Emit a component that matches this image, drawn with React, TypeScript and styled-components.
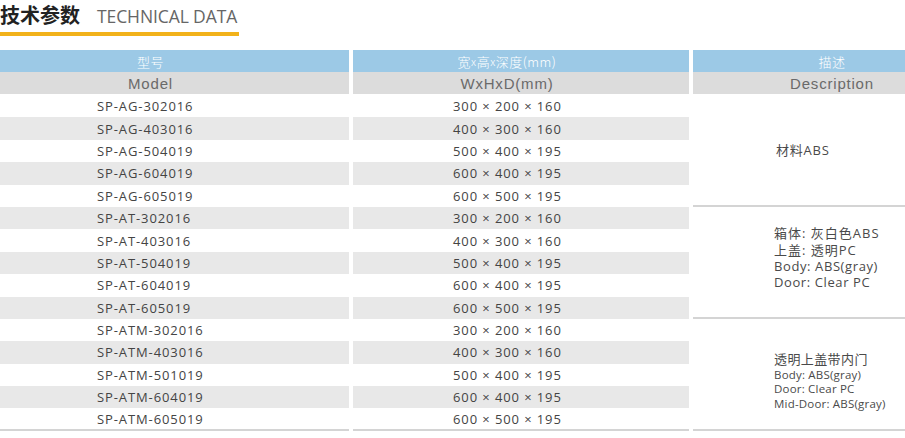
import styled, { createGlobalStyle } from "styled-components";

const GlobalStyle = createGlobalStyle`
  html, body {
    margin: 0;
    padding: 0;
    background: #fff;
    overflow: hidden;
  }
  body {
    font-family: "Open Sans", "Noto Sans CJK SC", sans-serif;
  }
`;

type Row = { model: string; size: string };

const groups: { rows: Row[]; desc: "abs" | "at" | "atm" }[] = [
  {
    desc: "abs",
    rows: [
      { model: "SP-AG-302016", size: "300 × 200 × 160" },
      { model: "SP-AG-403016", size: "400 × 300 × 160" },
      { model: "SP-AG-504019", size: "500 × 400 × 195" },
      { model: "SP-AG-604019", size: "600 × 400 × 195" },
      { model: "SP-AG-605019", size: "600 × 500 × 195" },
    ],
  },
  {
    desc: "at",
    rows: [
      { model: "SP-AT-302016", size: "300 × 200 × 160" },
      { model: "SP-AT-403016", size: "400 × 300 × 160" },
      { model: "SP-AT-504019", size: "500 × 400 × 195" },
      { model: "SP-AT-604019", size: "600 × 400 × 195" },
      { model: "SP-AT-605019", size: "600 × 500 × 195" },
    ],
  },
  {
    desc: "atm",
    rows: [
      { model: "SP-ATM-302016", size: "300 × 200 × 160" },
      { model: "SP-ATM-403016", size: "400 × 300 × 160" },
      { model: "SP-ATM-501019", size: "500 × 400 × 195" },
      { model: "SP-ATM-604019", size: "600 × 400 × 195" },
      { model: "SP-ATM-605019", size: "600 × 500 × 195" },
    ],
  },
];

const Page = styled.div`
  width: 905px;
`;

const TitleBlock = styled.div`
  display: inline-flex;
  flex-direction: column;
  width: 239px;
`;

const TitleLine = styled.div`
  display: flex;
  align-items: baseline;
  gap: 17px;
  height: 32px;
  box-sizing: border-box;
`;

const TitleCn = styled.h2`
  margin: 0;
  font-family: "Noto Sans CJK SC", sans-serif;
  font-size: 20px;
  font-weight: 700;
  color: #222;
  line-height: 30px;
`;

const TitleEn = styled.span`
  font-family: "Open Sans", sans-serif;
  font-size: 17.5px;
  font-weight: 400;
  color: #666;
  letter-spacing: -0.1px;
`;

const TitleBar = styled.div`
  height: 4px;
  background: #f2b21a;
`;

const Grid = styled.div`
  margin-top: 14px;
  display: grid;
  grid-template-columns: 349px 336px 1fr;
  column-gap: 4px;
`;

const HeadCell = styled.div<{ $tone: "blue" | "gray"; $shift: number }>`
  height: 22px;
  display: flex;
  align-items: center;
  justify-content: center;
  padding-left: ${(p) => Math.max(p.$shift, 0) * 2}px;
  padding-right: ${(p) => Math.max(-p.$shift, 0) * 2}px;
  background: ${(p) => (p.$tone === "blue" ? "#9cc9e6" : "#dcdcdc")};
  color: ${(p) => (p.$tone === "blue" ? "#fff" : "#6a6a6a")};
  font-family: ${(p) =>
    p.$tone === "blue"
      ? `"Noto Sans CJK SC", sans-serif`
      : `"Liberation Sans", Arial, sans-serif`};
  font-size: ${(p) => (p.$tone === "blue" ? "13px" : "15px")};
  letter-spacing: ${(p) => (p.$tone === "blue" ? "0.5px" : "0.8px")};
  font-weight: 300;
  margin-bottom: ${(p) => (p.$tone === "gray" ? "1px" : "0")};
`;

const Small = styled.span`
  font-size: 11px;
`;

const BodyCell = styled.div<{ $col: 1 | 2; $alt: boolean; $last: boolean; $pad: number }>`
  grid-column: ${(p) => p.$col};
  height: 22.4px;
  box-sizing: border-box;
  display: flex;
  align-items: center;
  padding-left: ${(p) => p.$pad}px;
  background: ${(p) => (p.$alt ? "#e8e8e8" : "#fff")};
  border-bottom: ${(p) => (p.$last ? "2px solid #d4d4d4" : "none")};
  color: #444;
  font-size: 13px;
  letter-spacing: 0.9px;
  white-space: nowrap;
`;

const DescCell = styled.div<{ $offset: number }>`
  grid-column: 3;
  grid-row: span 5;
  box-sizing: border-box;
  border-bottom: 2px solid #d4d4d4;
  display: flex;
  flex-direction: column;
  justify-content: center;
  padding-left: 81px;
  padding-top: ${(p) => Math.max(p.$offset, 0) * 2}px;
  padding-bottom: ${(p) => Math.max(-p.$offset, 0) * 2 + 2}px;
  color: #4a4a4a;
  font-family: "Open Sans", "Noto Sans CJK SC", sans-serif;
`;

const DescLine = styled.div<{ $size?: number; $lh?: number; $ls?: number }>`
  font-size: ${(p) => p.$size ?? 13}px;
  line-height: ${(p) => p.$lh ?? 16.3}px;
  letter-spacing: ${(p) => p.$ls ?? 0.6}px;
  white-space: nowrap;
`;

function Description({ kind }: { kind: "abs" | "at" | "atm" }) {
  if (kind === "abs") {
    return (
      <DescCell $offset={1}>
        <DescLine $ls={0.8} style={{ marginLeft: 2 }}>
          材料ABS
        </DescLine>
      </DescCell>
    );
  }
  if (kind === "at") {
    return (
      <DescCell $offset={-3}>
        <DescLine $ls={1}>箱体: 灰白色ABS</DescLine>
        <DescLine $ls={1}>上盖: 透明PC</DescLine>
        <DescLine>Body: ABS(gray)</DescLine>
        <DescLine>Door: Clear PC</DescLine>
      </DescCell>
    );
  }
  return (
    <DescCell $offset={8}>
      <DescLine $size={13} $lh={17} $ls={0.4}>
        透明上盖带内门
      </DescLine>
      <DescLine $size={11.5} $lh={14.5} $ls={0.2}>
        Body: ABS(gray)
      </DescLine>
      <DescLine $size={11.5} $lh={14.5} $ls={0.2}>
        Door: Clear PC
      </DescLine>
      <DescLine $size={11.5} $lh={14.5} $ls={0.2}>
        Mid-Door: ABS(gray)
      </DescLine>
    </DescCell>
  );
}

export default function App() {
  let index = 0;
  return (
    <Page>
      <GlobalStyle />
      <TitleBlock>
        <TitleLine>
          <TitleCn>技术参数</TitleCn>
          <TitleEn>TECHNICAL DATA</TitleEn>
        </TitleLine>
        <TitleBar />
      </TitleBlock>
      <Grid>
        <HeadCell $tone="blue" $shift={-24}>型号</HeadCell>
        <HeadCell $tone="blue" $shift={-14}>
          宽<Small>x</Small>高<Small>x</Small>深度(mm)
        </HeadCell>
        <HeadCell $tone="blue" $shift={33}>描述</HeadCell>
        <HeadCell $tone="gray" $shift={-24}>Model</HeadCell>
        <HeadCell $tone="gray" $shift={-14}>WxHxD(mm)</HeadCell>
        <HeadCell $tone="gray" $shift={33}>Description</HeadCell>
        {groups.map((g, gi) =>
          g.rows.map((r, ri) => {
            const alt = index++ % 2 === 1;
            const last = gi === groups.length - 1 && ri === g.rows.length - 1;
            return [
              <BodyCell key={r.model + "m"} $col={1} $alt={alt} $last={last} $pad={97}>
                {r.model}
              </BodyCell>,
              <BodyCell key={r.model + "s"} $col={2} $alt={alt} $last={last} $pad={100}>
                {r.size}
              </BodyCell>,
              ri === 0 ? <Description key={r.model + "d"} kind={g.desc} /> : null,
            ];
          })
        )}
      </Grid>
    </Page>
  );
}
